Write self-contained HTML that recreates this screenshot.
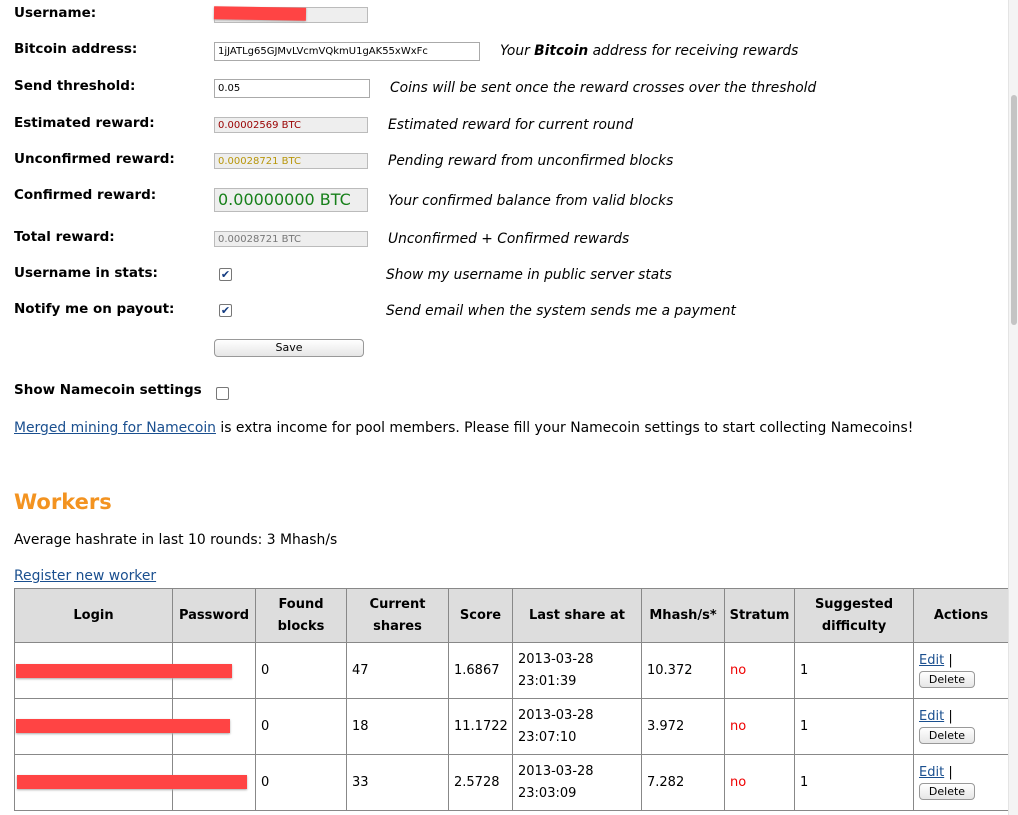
<!DOCTYPE html>
<html><head><meta charset="utf-8"><style>
body{margin:0;width:1018px;height:815px;overflow:hidden;background:#fff;font-family:"DejaVu Sans",Verdana,sans-serif;font-size:13px;color:#000;position:relative}
.a{position:absolute;white-space:nowrap}
.lb{font-weight:bold;font-size:13.5px}
.in{position:absolute;border:1px solid #bbb;background:#eee;height:16px;font-size:10px;line-height:16px;padding-left:3px;box-sizing:border-box}
.w{background:#fff;border-color:#aaa}
.it{font-style:italic;font-size:13.8px}
.cb{position:absolute;width:11px;height:11px;border:1px solid #777;border-radius:2px;background:#fff;font-size:11px;line-height:11px;text-align:center;color:#123a80}
a{color:#1a4f8f;text-decoration:underline}
table{position:absolute;left:14px;top:588px;border-collapse:collapse;font-size:13px;table-layout:fixed;width:994px}
td,th{border:1px solid #888;padding:0 5px;height:55px;white-space:nowrap;overflow:visible}
th{background:#ddd;font-weight:bold;height:53px;line-height:22px;padding:0 2px}
.btn{display:inline-block;border:1px solid #999;border-radius:4px;background:linear-gradient(#fff,#e6e6e6);font-size:11px;width:54px;text-align:center;line-height:15px;margin-top:3px}
.red{position:absolute;height:14px;background:#f44;box-shadow:0 1px 2px #aaa}
</style></head><body>
<div class="a lb" style="left:14px;top:5px">Username:</div>
<div class="in" style="left:214px;top:7px;width:154px"></div>
<div class="red" style="left:214px;top:7px;width:92px;height:13px;transform:rotate(1deg)"></div>
<div class="a lb" style="left:14px;top:41px">Bitcoin address:</div>
<div class="in w" style="left:214px;top:42px;width:266px;height:19px;line-height:18px">1jJATLg65GJMvLVcmVQkmU1gAK55xWxFc</div>
<div class="a it" style="left:500px;top:43px">Your <b>Bitcoin</b> address for receiving rewards</div>
<div class="a lb" style="left:14px;top:78px">Send threshold:</div>
<div class="in w" style="left:214px;top:79px;width:156px;height:19px;line-height:18px">0.05</div>
<div class="a it" style="left:390px;top:80px">Coins will be sent once the reward crosses over the threshold</div>
<div class="a lb" style="left:14px;top:115px">Estimated reward:</div>
<div class="in" style="left:214px;top:117px;width:154px;color:#900">0.00002569 BTC</div>
<div class="a it" style="left:388px;top:117px">Estimated reward for current round</div>
<div class="a lb" style="left:14px;top:151px">Unconfirmed reward:</div>
<div class="in" style="left:214px;top:153px;width:154px;color:#b8960a">0.00028721 BTC</div>
<div class="a it" style="left:388px;top:153px">Pending reward from unconfirmed blocks</div>
<div class="a lb" style="left:14px;top:187px">Confirmed reward:</div>
<div class="in" style="left:214px;top:188px;width:154px;height:24px;line-height:22px;font-size:16px;color:#17801a">0.00000000 BTC</div>
<div class="a it" style="left:388px;top:193px">Your confirmed balance from valid blocks</div>
<div class="a lb" style="left:14px;top:229px">Total reward:</div>
<div class="in" style="left:214px;top:231px;width:154px;color:#777">0.00028721 BTC</div>
<div class="a it" style="left:388px;top:231px">Unconfirmed + Confirmed rewards</div>
<div class="a lb" style="left:14px;top:265px">Username in stats:</div>
<div class="cb" style="left:219px;top:268px">✔</div>
<div class="a it" style="left:386px;top:267px">Show my username in public server stats</div>
<div class="a lb" style="left:14px;top:301px">Notify me on payout:</div>
<div class="cb" style="left:219px;top:304px">✔</div>
<div class="a it" style="left:386px;top:303px">Send email when the system sends me a payment</div>
<div class="a" style="left:214px;top:339px;width:148px;height:16px;border:1px solid #999;border-radius:4px;background:linear-gradient(#fff,#e6e6e6);font-size:11px;text-align:center;line-height:16px">Save</div>
<div class="a lb" style="left:14px;top:382px">Show Namecoin settings</div>
<div class="cb" style="left:216px;top:387px"></div>
<div class="a" style="left:14px;top:420px;font-size:13.9px"><a>Merged mining for Namecoin</a> is extra income for pool members. Please fill your Namecoin settings to start collecting Namecoins!</div>
<div class="a" style="left:14px;top:490px;font-size:21px;font-weight:bold;color:#f39320">Workers</div>
<div class="a" style="left:14px;top:532px;font-size:13.9px">Average hashrate in last 10 rounds: 3 Mhash/s</div>
<div class="a" style="left:14px;top:568px;font-size:13.9px"><a>Register new worker</a></div>
<table>
<colgroup><col style="width:158px"><col style="width:83px"><col style="width:91px"><col style="width:102px"><col style="width:64px"><col style="width:129px"><col style="width:83px"><col style="width:70px"><col style="width:119px"><col style="width:95px"></colgroup>
<tr><th>Login</th><th>Password</th><th>Found<br>blocks</th><th>Current<br>shares</th><th>Score</th><th>Last share at</th><th>Mhash/s*</th><th>Stratum</th><th>Suggested<br>difficulty</th><th>Actions</th></tr>
<tr><td></td><td></td><td>0</td><td>47</td><td>1.6867</td><td style="line-height:22px">2013-03-28<br>23:01:39</td><td>10.372</td><td style="color:#e00">no</td><td>1</td><td style="line-height:15px"><a>Edit</a> |<br><span class="btn">Delete</span></td></tr>
<tr><td></td><td></td><td>0</td><td>18</td><td>11.1722</td><td style="line-height:22px">2013-03-28<br>23:07:10</td><td>3.972</td><td style="color:#e00">no</td><td>1</td><td style="line-height:15px"><a>Edit</a> |<br><span class="btn">Delete</span></td></tr>
<tr><td></td><td></td><td>0</td><td>33</td><td>2.5728</td><td style="line-height:22px">2013-03-28<br>23:03:09</td><td>7.282</td><td style="color:#e00">no</td><td>1</td><td style="line-height:15px"><a>Edit</a> |<br><span class="btn">Delete</span></td></tr>
</table>
<div class="red" style="left:16px;top:664px;width:216px"></div>
<div class="red" style="left:16px;top:719px;width:214px"></div>
<div class="red" style="left:17px;top:775px;width:230px"></div>
<div class="a" style="left:1008px;top:0;width:10px;height:815px;background:#f4f4f4;border-left:1px solid #e4e4e4"></div>
<div class="a" style="left:1011px;top:95px;width:6px;height:230px;background:#c4c4c4;border-radius:3px"></div>
</body></html>
